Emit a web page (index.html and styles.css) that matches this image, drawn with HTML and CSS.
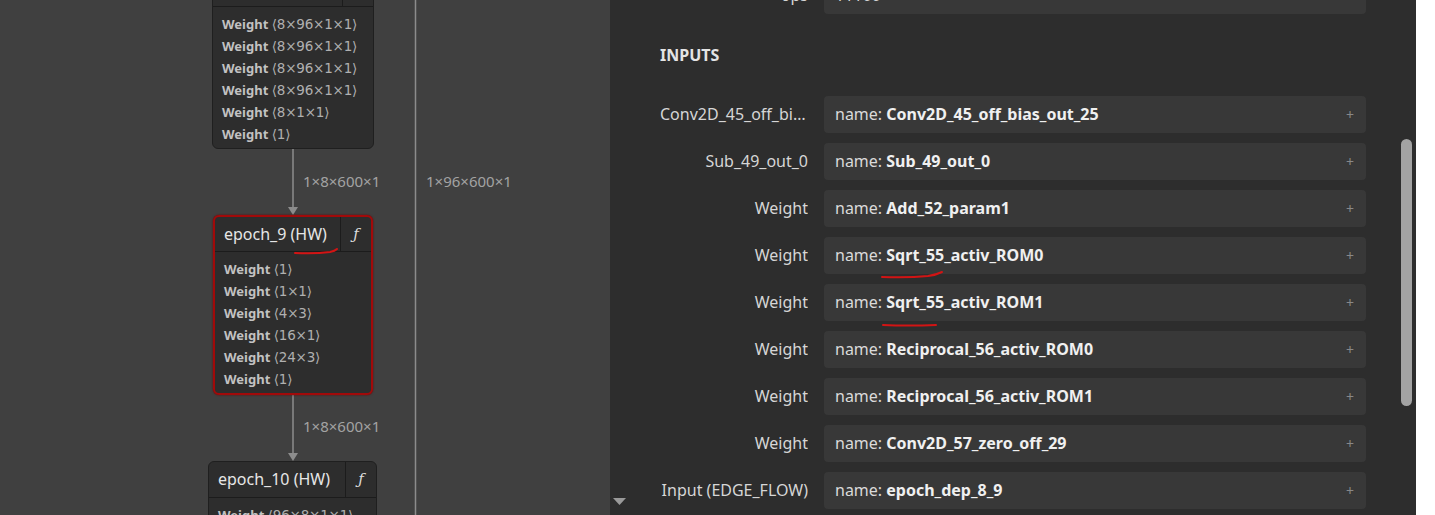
FILE: index.html
```html
<!DOCTYPE html>
<html lang="en">
<head>
  <meta charset="UTF-8" />
  <title>Model graph</title>
  <link rel="stylesheet" href="styles.css">
</head>
<body>

  <div id="app">

    <div id="graph">
      <svg class="edges" width="610" height="515">
        <line x1="293" y1="148" x2="293" y2="208" />
        <polygon points="288,207 298,207 293,215" />
        <line x1="293" y1="393" x2="293" y2="454" />
        <polygon points="288,453 298,453 293,461" />
        <line x1="415.5" y1="0" x2="415.5" y2="515" />
      </svg>

      <div class="edge-label" style="left:303px; top:171px">1×8×600×1</div>
      <div class="edge-label" style="left:426px; top:171px">1×96×600×1</div>
      <div class="edge-label" style="left:303px; top:416px">1×8×600×1</div>

      <div class="node" style="left:212px; top:-30px; width:162px">
        <div class="node-head"><span class="node-name">epoch_8 (HW)</span><span class="node-fn">ƒ</span></div>
        <div class="node-body">
          <div class="attr"><b>Weight</b> <span class="shape">⟨8×96×1×1⟩</span></div>
          <div class="attr"><b>Weight</b> <span class="shape">⟨8×96×1×1⟩</span></div>
          <div class="attr"><b>Weight</b> <span class="shape">⟨8×96×1×1⟩</span></div>
          <div class="attr"><b>Weight</b> <span class="shape">⟨8×96×1×1⟩</span></div>
          <div class="attr"><b>Weight</b> <span class="shape">⟨8×1×1⟩</span></div>
          <div class="attr"><b>Weight</b> <span class="shape">⟨1⟩</span></div>
        </div>
      </div>

      <div class="node selected" style="left:213px; top:215px; width:160px">
        <div class="node-head"><span class="node-name">epoch_9 (HW)</span><span class="node-fn">ƒ</span></div>
        <div class="node-body">
          <div class="attr"><b>Weight</b> <span class="shape">⟨1⟩</span></div>
          <div class="attr"><b>Weight</b> <span class="shape">⟨1×1⟩</span></div>
          <div class="attr"><b>Weight</b> <span class="shape">⟨4×3⟩</span></div>
          <div class="attr"><b>Weight</b> <span class="shape">⟨16×1⟩</span></div>
          <div class="attr"><b>Weight</b> <span class="shape">⟨24×3⟩</span></div>
          <div class="attr"><b>Weight</b> <span class="shape">⟨1⟩</span></div>
        </div>
      </div>

      <div class="node" style="left:208px; top:461px; width:169px">
        <div class="node-head"><span class="node-name">epoch_10 (HW)</span><span class="node-fn">ƒ</span></div>
        <div class="node-body">
          <div class="attr"><b>Weight</b> <span class="shape">⟨96×8×1×1⟩</span></div>
        </div>
      </div>

      <!-- red markup -->
      <svg class="markup" style="left:290px; top:244px" width="52" height="14">
        <path d="M5 9 Q 25 10 40 8 Q 45 7 47 5" />
      </svg>
    </div>

    <div id="sidebar">
      <div class="sidebar-content">
        <div class="prop prop-top">
          <div class="prop-label">ops</div>
          <div class="prop-value">11100</div>
        </div>

        <h3>INPUTS</h3>

        <div class="prop">
          <div class="prop-label">Conv2D_45_off_bias_out_25</div>
          <div class="prop-value">name: <b>Conv2D_45_off_bias_out_25</b><span class="expand">+</span></div>
        </div>
        <div class="prop">
          <div class="prop-label">Sub_49_out_0</div>
          <div class="prop-value">name: <b>Sub_49_out_0</b><span class="expand">+</span></div>
        </div>
        <div class="prop">
          <div class="prop-label">Weight</div>
          <div class="prop-value">name: <b>Add_52_param1</b><span class="expand">+</span></div>
        </div>
        <div class="prop">
          <div class="prop-label">Weight</div>
          <div class="prop-value">name: <b>Sqrt_55_activ_ROM0</b><span class="expand">+</span></div>
        </div>
        <div class="prop">
          <div class="prop-label">Weight</div>
          <div class="prop-value">name: <b>Sqrt_55_activ_ROM1</b><span class="expand">+</span></div>
        </div>
        <div class="prop">
          <div class="prop-label">Weight</div>
          <div class="prop-value">name: <b>Reciprocal_56_activ_ROM0</b><span class="expand">+</span></div>
        </div>
        <div class="prop">
          <div class="prop-label">Weight</div>
          <div class="prop-value">name: <b>Reciprocal_56_activ_ROM1</b><span class="expand">+</span></div>
        </div>
        <div class="prop">
          <div class="prop-label">Weight</div>
          <div class="prop-value">name: <b>Conv2D_57_zero_off_29</b><span class="expand">+</span></div>
        </div>
        <div class="prop">
          <div class="prop-label">Input (EDGE_FLOW)</div>
          <div class="prop-value">name: <b>epoch_dep_8_9</b><span class="expand">+</span></div>
        </div>
      </div>

      <div class="scroll-thumb"></div>
      <svg class="collapse" width="14" height="8"><polygon points="0,0 13,0 6.5,7" /></svg>

      <!-- red markup -->
      <svg class="markup" style="left:268px; top:267px" width="70" height="14">
        <path d="M4 10 Q 30 11 50 9 Q 58 8 64 5" />
      </svg>
      <svg class="markup" style="left:268px; top:319px" width="70" height="12">
        <path d="M5 6 Q 30 7 58 6" />
      </svg>
    </div>

  </div>

</body>
</html>
```

FILE: styles.css
```css
* { margin: 0; padding: 0; box-sizing: border-box; }

body {
  font-family: "Noto Sans", "DejaVu Sans", sans-serif;
  background-color: #ffffff;
  overflow: hidden;
}

#app {
  display: flex;
  width: 1435px;
  height: 515px;
}

/* graph canvas */
#graph {
  position: relative;
  width: 610px;
  height: 515px;
  background-color: #404040;
  overflow: hidden;
  flex-shrink: 0;
}

.edges {
  position: absolute;
  left: 0;
  top: 0;
}
.edges line {
  stroke: #8c8c8c;
  stroke-width: 1.5;
}
.edges polygon { fill: #8c8c8c; }

.edge-label {
  position: absolute;
  font-size: 15px;
  line-height: 20px;
  color: #a3a3a3;
  white-space: nowrap;
}

.node {
  position: absolute;
  background-color: #2d2d2d;
  border: 1px solid #1f1f1f;
  border-radius: 6px;
  color: #e0e0e0;
}
.node.selected {
  border: 2px solid #a10a0a;
  box-shadow: 0 0 2px #6b0000;
}

.node-head {
  display: flex;
  height: 36px;
  border-bottom: 1px solid #1c1c1c;
}
.node.selected .node-head { height: 35px; }

.node-name {
  flex-grow: 1;
  padding-left: 9px;
  font-size: 16px;
  line-height: 35px;
  white-space: nowrap;
  color: #e6e6e6;
}
.node-fn {
  width: 31px;
  border-left: 1px solid #1c1c1c;
  text-align: center;
  font-family: "DejaVu Serif", serif;
  font-style: italic;
  font-size: 15px;
  line-height: 35px;
  color: #dcdcdc;
}

.node-body {
  padding: 6px 9px 3px;
}
.attr {
  font-size: 13px;
  line-height: 22px;
  color: #aaaaaa;
  white-space: nowrap;
}
.attr b { color: #c2c2c2; }
.attr .shape {
  font-family: "DejaVu Sans", sans-serif;
  font-size: 13.5px;
  letter-spacing: -0.2px;
  color: #b0b0b0;
}

.markup {
  position: absolute;
  fill: none;
}
.markup path {
  stroke: #d21414;
  stroke-width: 2;
  stroke-linecap: round;
}

/* properties panel */
#sidebar {
  position: relative;
  width: 806px;
  height: 515px;
  background-color: #2d2d2d;
  overflow: hidden;
  flex-shrink: 0;
}

.sidebar-content {
  padding-left: 50px;
  margin-top: -23px;
  display: flex;
  flex-direction: column;
  gap: 10px;
}

.sidebar-content h3 {
  font-size: 16px;
  font-weight: bold;
  line-height: 20px;
  color: #e4e4e4;
  margin: 21px 0 21px;
}

.prop {
  display: flex;
  gap: 16px;
  height: 37px;
}

.prop-label {
  width: 148px;
  text-align: right;
  font-size: 16px;
  line-height: 37px;
  color: #d6d6d6;
  white-space: nowrap;
  overflow: hidden;
  text-overflow: ellipsis;
}

.prop-value {
  position: relative;
  width: 542px;
  background-color: #383838;
  border-radius: 4px;
  padding-left: 11px;
  font-size: 16px;
  line-height: 37px;
  color: #dadada;
  white-space: nowrap;
}
.prop-value b { color: #f0f0f0; }

.expand {
  position: absolute;
  right: 12px;
  top: 0;
  font-size: 14px;
  color: #888888;
}

.scroll-thumb {
  position: absolute;
  left: 791px;
  top: 139px;
  width: 11px;
  height: 267px;
  border-radius: 6px;
  background-color: #a3a3a3;
}

.collapse {
  position: absolute;
  left: 3px;
  top: 498px;
  fill: #9a9a9a;
}
```
